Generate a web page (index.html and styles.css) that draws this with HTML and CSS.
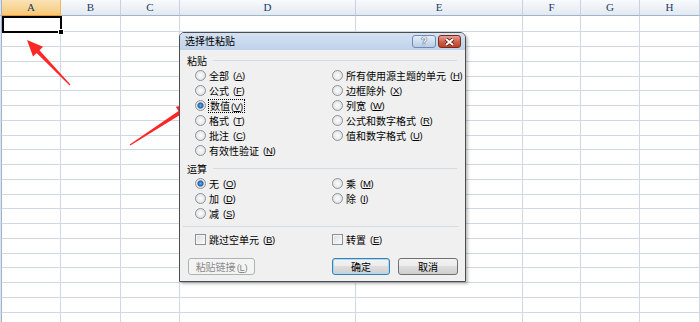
FILE: index.html
```html
<!DOCTYPE html>
<html lang="zh-CN">
<head>
    <meta charset="UTF-8">
    <title>选择性粘贴</title>
    <link rel="stylesheet" href="styles.css">
</head>
<body>

<div class="sheet" id="sheet">
    <div class="row head">
        <div></div>
        <div class="active">A</div>
        <div>B</div>
        <div>C</div>
        <div>D</div>
        <div>E</div>
        <div>F</div>
        <div>G</div>
        <div>H</div>
    </div>
</div>

<svg class="arrows" width="700" height="322" viewBox="0 0 700 322">
    <polygon points="27,40 43.1,46.7 39.5,50.2 70.4,84.6 69.6,85.4 36.6,53 33,56.4" />
    <polygon points="193,104 183.4,118.6 180.7,114.4 130.3,145.4 129.7,144.6 178.5,111 175.8,106.8" />
</svg>

<div class="dlg">
    <div class="dlg-title">
        <span class="caption">选择性粘贴</span>
        <span class="tbtn help">?</span>
        <span class="tbtn close">
            <svg width="11" height="8" viewBox="0 0 11 8">
                <path d="M2 1 L9 7 M9 1 L2 7" stroke="#5a1a10" stroke-width="3.6" />
                <path d="M2 1 L9 7 M9 1 L2 7" stroke="#fff" stroke-width="2" />
            </svg>
        </span>
    </div>
    <div class="dlg-body">
        <div class="group">粘贴</div>
        <div class="opts">
            <div class="opt"><span class="radio"></span>全部<span class="key">(<u>A</u>)</span></div>
            <div class="opt"><span class="radio"></span>所有使用源主题的单元<span class="key">(<u>H</u>)</span></div>
            <div class="opt"><span class="radio"></span>公式<span class="key">(<u>F</u>)</span></div>
            <div class="opt"><span class="radio"></span>边框除外<span class="key">(<u>X</u>)</span></div>
            <div class="opt"><span class="radio on"></span><span class="focus">数值<span class="key">(<u>V</u>)</span></span></div>
            <div class="opt"><span class="radio"></span>列宽<span class="key">(<u>W</u>)</span></div>
            <div class="opt"><span class="radio"></span>格式<span class="key">(<u>T</u>)</span></div>
            <div class="opt"><span class="radio"></span>公式和数字格式<span class="key">(<u>R</u>)</span></div>
            <div class="opt"><span class="radio"></span>批注<span class="key">(<u>C</u>)</span></div>
            <div class="opt"><span class="radio"></span>值和数字格式<span class="key">(<u>U</u>)</span></div>
            <div class="opt"><span class="radio"></span>有效性验证<span class="key">(<u>N</u>)</span></div>
        </div>

        <div class="group ops-label">运算</div>
        <div class="opts">
            <div class="opt"><span class="radio on"></span>无<span class="key">(<u>O</u>)</span></div>
            <div class="opt"><span class="radio"></span>乘<span class="key">(<u>M</u>)</span></div>
            <div class="opt"><span class="radio"></span>加<span class="key">(<u>D</u>)</span></div>
            <div class="opt"><span class="radio"></span>除<span class="key">(<u>I</u>)</span></div>
            <div class="opt"><span class="radio"></span>减<span class="key">(<u>S</u>)</span></div>
        </div>

        <div class="sep"></div>

        <div class="opts">
            <div class="opt"><span class="check"></span>跳过空单元<span class="key">(<u>B</u>)</span></div>
            <div class="opt"><span class="check"></span>转置<span class="key">(<u>E</u>)</span></div>
        </div>

        <div class="buttons">
            <button class="btn link" disabled>粘贴链接<span class="key">(<u>L</u>)</span></button>
            <button class="btn ok">确定</button>
            <button class="btn cancel">取消</button>
        </div>
    </div>
</div>

<script>
    var sheet = document.getElementById('sheet');
    var heights = [16];
    for (var i = 0; i < 20; i++) {
        heights.push(i % 4 === 3 ? 14 : 15);
    }

    heights.forEach(function(h, r) {
        var row = document.createElement('div');
        row.className = 'row';
        row.style.height = h + 'px';
        for (var c = 0; c < 9; c++) {
            var cell = document.createElement('div');
            if (r === 0 && c === 1) {
                cell.className = 'cur';
                var sel = document.createElement('span');
                sel.className = 'sel';
                cell.appendChild(sel);
            }
            row.appendChild(cell);
        }
        sheet.appendChild(row);
    });
</script>

</body>
</html>
```

FILE: styles.css
```css
body {
    margin: 0;
    width: 700px;
    height: 322px;
    overflow: hidden;
    position: relative;
    background: #fff;
    font-family: "Noto Sans CJK SC", "Noto Sans", sans-serif;
    font-size: 10px;
    color: #000;
}

/* worksheet */
.row {
    display: grid;
    grid-template-columns: 2px 59px 60px 59px 176px 167px 58px 59px 1fr;
}
.row > div {
    box-sizing: border-box;
    border-right: 1px solid #d0d8e5;
    border-bottom: 1px solid #d0d8e5;
}
.row > div:first-child {
    background: #dbe5f1;
    border-right-color: #9fb4cc;
}
.head > div {
    height: 16px;
    background: linear-gradient(#f8fafd, #e3e9f1);
    border-right-color: #c6d2e0;
    border-bottom-color: #9fb4cc;
    font-family: "Liberation Serif", serif;
    font-size: 11px;
    line-height: 15px;
    text-align: center;
    color: #1d3a63;
}
.head > div.active {
    background: linear-gradient(#fae3b6, #f6c978);
    border-right-color: #f2b55a;
    border-bottom: 1px solid #f0952f;
}
.cur {
    position: relative;
}
.sel {
    position: absolute;
    left: 0;
    top: 0;
    width: 60px;
    height: 17px;
    box-sizing: border-box;
    border: 2px solid #000;
}
.sel::after {
    content: "";
    position: absolute;
    right: -4px;
    bottom: -4px;
    width: 4px;
    height: 4px;
    background: #000;
    border: 1px solid #fff;
}

.arrows {
    position: absolute;
    left: 0;
    top: 0;
    pointer-events: none;
}
.arrows polygon {
    fill: #ff2626;
}

/* dialog */
.dlg {
    position: absolute;
    left: 179px;
    top: 32px;
    width: 287px;
    height: 250px;
    box-sizing: border-box;
    border: 1px solid #4d4d4d;
    border-radius: 5px 6px 0 0;
    background: #f0f0f0;
    box-shadow: 2px 2px 3px rgba(0, 0, 0, 0.25);
}
.dlg-title {
    height: 17px;
    display: flex;
    align-items: flex-start;
    gap: 2px;
    padding: 2px 4px 0 5px;
    box-sizing: border-box;
    background: linear-gradient(#d4e2f3, #bfd2ea);
    border-radius: 4px 5px 0 0;
}
.caption {
    flex: 1;
    line-height: 15px;
    margin-top: -2px;
}
.tbtn {
    height: 13px;
    box-sizing: border-box;
    border-radius: 3px;
    display: flex;
    align-items: center;
    justify-content: center;
}
.help {
    width: 24px;
    border: 1px solid #6e8cb0;
    background: linear-gradient(#e6eef8, #b9cde6);
    font-family: "Liberation Sans", sans-serif;
    font-weight: bold;
    font-size: 10px;
    color: #f4f4f4;
    text-shadow: 0 0 1px #2e4a70, 0 0 1px #2e4a70;
}
.close {
    width: 23px;
    border: 1px solid #7a2a1c;
    background: linear-gradient(#e8a393, #d0604a 50%, #c0412b);
}

.dlg-body {
    padding: 3px 7px 0 7px;
}
.group {
    display: flex;
    align-items: center;
    gap: 6px;
    height: 15px;
    line-height: 15px;
}
.group::after {
    content: "";
    flex: 1;
    border-top: 1px solid #d6dbe0;
    margin-right: 1px;
}
.ops-label {
    margin-top: 3px;
}
.opts {
    display: grid;
    grid-template-columns: 137px 1fr;
    grid-auto-rows: 15px;
    margin-left: 8px;
}
.opt {
    display: flex;
    align-items: center;
    gap: 3px;
    line-height: 15px;
    white-space: nowrap;
}
.key {
    font-family: "Liberation Sans", sans-serif;
    font-size: 9.5px;
    margin-left: 1px;
    letter-spacing: -0.3px;
}
.radio {
    width: 11px;
    height: 11px;
    box-sizing: border-box;
    border-radius: 50%;
    border: 1px solid #8e9194;
    background: radial-gradient(circle at 50% 50%, #fdfdfd, #d9dbdd);
}
.radio.on {
    background: radial-gradient(circle at 50% 50%, #66b2f0 0, #1d5fa9 2.5px, #dadcde 3.5px, #f7f7f7 5px);
}
.check {
    width: 11px;
    height: 11px;
    box-sizing: border-box;
    border: 1px solid #8e9194;
    background: linear-gradient(135deg, #dcdcdc, #fbfbfb);
    box-shadow: inset 0 0 0 1px #f4f4f4;
}
.focus {
    outline: 1px dotted #000;
    line-height: 11px;
    padding: 0 1px;
}
.sep {
    border-top: 1px solid #d6dbe0;
    margin: 5px -1px 5px -4px;
}

.buttons {
    display: flex;
    margin-top: 11px;
}
.btn {
    height: 17px;
    padding: 0;
    box-sizing: border-box;
    border: 1px solid #707070;
    border-radius: 3px;
    background: linear-gradient(#f3f3f3 0, #ebebeb 50%, #dddddd 50%, #cfcfcf);
    font-family: "Noto Sans CJK SC", sans-serif;
    font-size: 10px;
    line-height: 15px;
    color: #000;
}
.btn.link {
    width: 67px;
    margin-left: 1px;
    border-color: #adb2b5;
    background: #f4f4f4;
    color: #8a8a8a;
}
.btn.ok {
    width: 58px;
    margin-left: auto;
    border-color: #3c7fb1;
    box-shadow: inset 0 0 0 1px #a4dcf7;
}
.btn.cancel {
    width: 60px;
    margin-left: 8px;
}
```
